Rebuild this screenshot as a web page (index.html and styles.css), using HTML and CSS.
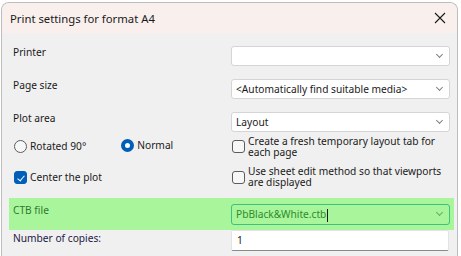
FILE: index.html
```html
<!DOCTYPE html>
<html lang="en">
<head>
    <meta charset="UTF-8">
    <title>Print settings</title>
    <link rel="stylesheet" href="styles.css">
</head>
<body>

    <!-- Dialog window -->
    <div class="dialog">
        <div class="titlebar">
            <span class="title">Print settings for format A4</span>
            <svg class="close" width="12" height="12" viewBox="0 0 12 12">
                <path d="M1 1 L11 11 M11 1 L1 11" stroke="#1a1a1a" stroke-width="1.1" fill="none"/>
            </svg>
        </div>

        <div class="content">
            <div class="row row-first">
                <span class="label">Printer</span>
                <div class="select"><span></span><i class="chevron"></i></div>
            </div>

            <div class="row">
                <span class="label">Page size</span>
                <div class="select"><span>&lt;Automatically find suitable media&gt;</span><i class="chevron"></i></div>
            </div>

            <div class="row">
                <span class="label">Plot area</span>
                <div class="select"><span>Layout</span><i class="chevron"></i></div>
            </div>

            <!-- Options -->
            <div class="row row-options">
                <div class="radios">
                    <label class="option"><span class="radio"></span>Rotated 90°</label>
                    <label class="option option-normal"><span class="radio checked"></span>Normal</label>
                </div>
                <label class="option"><span class="check"></span><span>Create a fresh temporary layout tab for each page</span></label>
            </div>

            <div class="row row-options row-second">
                <label class="option"><span class="check checked"></span>Center the plot</label>
                <label class="option"><span class="check"></span><span>Use sheet edit method so that viewports are displayed</span></label>
            </div>

            <!-- Highlighted CTB row -->
            <div class="row row-ctb">
                <span class="label">CTB file</span>
                <div class="select select-ctb"><span>PbBlack&amp;White.ctb<b class="caret"></b></span><i class="chevron"></i></div>
            </div>

            <div class="row row-copies">
                <span class="label">Number of copies:</span>
                <div class="number">1</div>
            </div>
        </div>
    </div>

</body>
</html>
```

FILE: styles.css
```css
* {
    box-sizing: border-box;
}
body {
    margin: 0;
    padding: 0;
    background-color: #ffffff;
    font-family: 'Noto Sans', 'Open Sans', sans-serif;
    font-size: 10.2px;
    color: #1a1a1a;
}
.dialog {
    margin: 2px 0 0 1px;
    width: 457px;
    height: 260px;
    border: 1px solid #bdbdbd;
    border-bottom: none;
    border-radius: 8px 8px 0 0;
    background-color: #f0f0f0;
    overflow: hidden;
}
.titlebar {
    height: 30px;
    background-color: #f9f0ed;
    display: flex;
    align-items: center;
    justify-content: space-between;
    padding: 0 8px 0 8px;
}
.title {
    font-size: 11.3px;
    color: #1a1a1a;
}
.close {
    margin-right: 3px;
}
.content {
    padding: 13px 7px 0 11px;
}
.row {
    display: grid;
    grid-template-columns: 218px 1fr;
    align-items: start;
    height: 20px;
    margin-top: 13px;
}
.row-first {
    margin-top: 0;
}
.label {
    white-space: nowrap;
    line-height: 13px;
}
.select {
    height: 20px;
    background-color: #ffffff;
    border: 1px solid #d5d5d5;
    border-radius: 3px;
    display: flex;
    align-items: center;
    justify-content: space-between;
    padding: 0 7px 0 4px;
    white-space: nowrap;
}
.chevron {
    width: 5px;
    height: 5px;
    border-right: 1px solid #808080;
    border-bottom: 1px solid #808080;
    transform: rotate(45deg);
    margin-top: -4px;
}
.row-options {
    align-items: center;
    margin-top: 3px;
    height: 23px;
}
.row-second {
    margin-top: 7px;
    height: 24px;
}
.radios {
    display: flex;
}
.option {
    display: flex;
    align-items: center;
    gap: 3px;
    line-height: 11px;
}
.option-normal {
    margin-left: 34px;
    margin-top: -2px;
}
.radio {
    width: 13px;
    height: 13px;
    border: 1px solid #5c5c5c;
    border-radius: 50%;
    margin-left: 1px;
    background-color: #f7f7f7;
    flex-shrink: 0;
}
.radio.checked {
    border: 4px solid #005fb8;
    background-color: #ffffff;
}
.check {
    width: 13px;
    height: 13px;
    border: 1px solid #5c5c5c;
    border-radius: 3px;
    margin-left: 1px;
    background-color: #f7f7f7;
    flex-shrink: 0;
    position: relative;
}
.check.checked {
    background-color: #005fb8;
    border-color: #005fb8;
}
.check.checked::after {
    content: '';
    position: absolute;
    left: 4px;
    top: 2px;
    width: 3px;
    height: 6px;
    border-right: 1px solid #ffffff;
    border-bottom: 1px solid #ffffff;
    transform: rotate(40deg);
}
.row-ctb {
    height: 32px;
    margin: 9px -4px 0 -4px;
    padding: 6px 4px 0 4px;
    background-color: #a8f59b;
}
.row-ctb .label {
    color: #2f7a2f;
}
.select-ctb {
    height: 21px;
    border-color: #3cc27c;
    background-color: #a8f59b;
    color: #2e8b2e;
}
.select-ctb .chevron {
    border-color: #6aa96a;
}
.caret {
    display: inline-block;
    width: 1px;
    height: 13px;
    background-color: #1a1a1a;
    vertical-align: middle;
    margin-left: 1px;
}
.row-copies {
    margin-top: 0;
    height: 21px;
}
.row-copies .label {
    color: #1b1b45;
    padding-top: 2px;
}
.number {
    height: 21px;
    margin-right: 1px;
    background-color: #ffffff;
    border: 1px solid #e3e3e3;
    border-bottom: 1px solid #8a8a8a;
    border-radius: 2px;
    padding: 0 5px;
    line-height: 19px;
}
```
